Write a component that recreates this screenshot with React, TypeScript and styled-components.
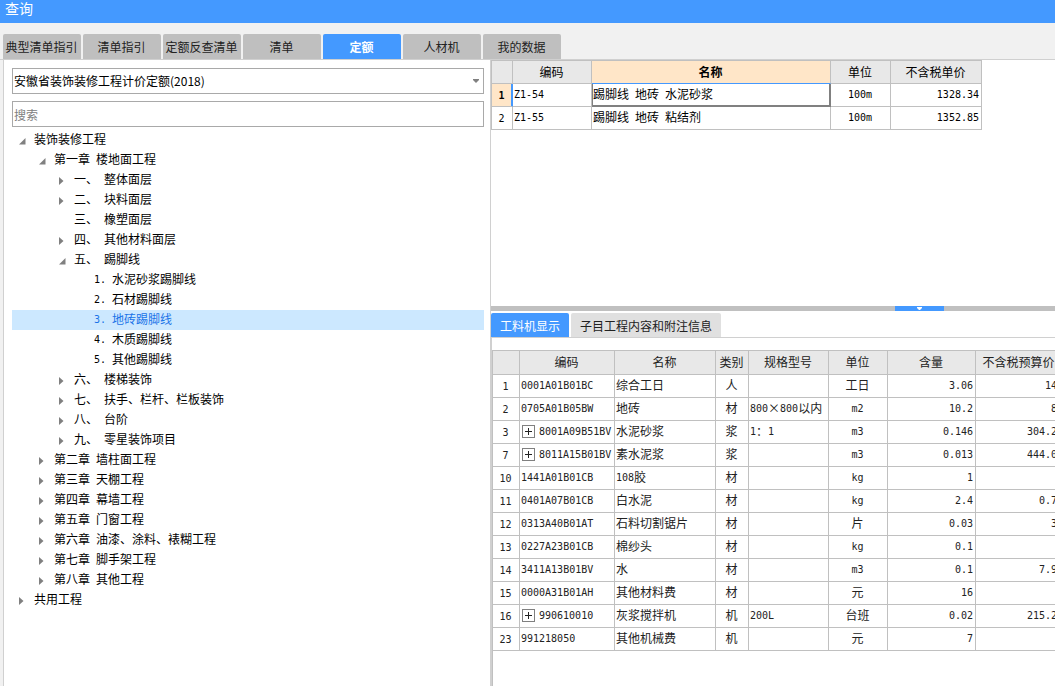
import React, { useState } from "react";
import styled, { createGlobalStyle, css } from "styled-components";

const BLUE = "#4499ff";
const LINE = "#c0c0c0";

const GlobalStyle = createGlobalStyle`
  * { box-sizing: border-box; }
  body {
    margin: 0;
    background: #f1f1f1;
    color: #000;
    font: 12px/20px "Noto Sans CJK SC", sans-serif;
    overflow: hidden;
  }
  button, input, select { font: inherit; color: inherit; }
`;

const Window = styled.div`
  display: flex;
  flex-direction: column;
  height: 100vh;
`;

const TitleBar = styled.header`
  flex: none;
  height: 23px;
  padding-left: 5px;
  background: ${BLUE};
  color: #fff;
  font-size: 14px;
  line-height: 16px;
`;

const TabStrip = styled.nav`
  flex: none;
  display: flex;
  gap: 2px;
  padding: 11px 3px 0;
  border-bottom: 1px solid #d0d0d0;
`;

const MainTab = styled.button<{ $active?: boolean }>`
  width: 78px;
  height: 25px;
  padding: 0 1px 0 0;
  border: 0;
  border-radius: 2px 2px 0 0;
  background: ${(p) => (p.$active ? BLUE : "#bfbfbf")};
  color: ${(p) => (p.$active ? "#fff" : "#222")};
  font-weight: ${(p) => (p.$active ? 700 : 400)};
  white-space: nowrap;
`;

const Body = styled.main`
  flex: 1;
  min-height: 0;
  display: flex;
  margin-left: 3px;
  background: #fff;
`;

const Sidebar = styled.aside`
  flex: 0 0 488px;
  padding: 8px 6px 0 8px;
  border: solid #d0d0d0;
  border-width: 0 1px;
  overflow: hidden;
`;

const SelectBox = styled.div`
  position: relative;
  margin-bottom: 7px;
`;

const fieldStyle = css`
  display: block;
  width: 100%;
  height: 26px;
  border: 1px solid #a9a9a9;
  border-radius: 0;
  background: #fff;
  outline: 0;
`;

const Select = styled.select`
  ${fieldStyle}
  appearance: none;
  padding: 0 20px 0 1px;
`;

const SelectArrow = styled.svg`
  position: absolute;
  right: 5px;
  top: 11px;
  pointer-events: none;
`;

const SearchInput = styled.input`
  ${fieldStyle}
  padding: 1px 1px 0;
  &::placeholder { color: #808080; opacity: 1; }
`;

const Tree = styled.ul`
  margin: 3px 0 0;
  padding: 0;
  list-style: none;
`;

const TreeRow = styled.li<{ $level: number; $selected: boolean }>`
  display: flex;
  align-items: center;
  height: 20px;
  padding: 0 0 2px ${(p) => 6 + p.$level * 20}px;
  background: ${(p) => (p.$selected ? "#cce8ff" : "transparent")};
  color: ${(p) => (p.$selected ? "#1a73e8" : "#000")};
  cursor: default;
`;

const Toggle = styled.button`
  display: flex;
  width: 16px;
  height: 20px;
  padding: 8px 0 0 1px;
  border: 0;
  background: none;
`;

const ToggleSpace = styled.span`
  width: 16px;
`;

const Latin = styled.span`
  font-family: "DejaVu Sans Mono", monospace;
  font-size: 10px;
  line-height: 0;
  vertical-align: 1px;
  white-space: pre;
`;

const Content = styled.section`
  flex: 1;
  min-width: 0;
  display: flex;
  flex-direction: column;
  overflow: hidden;
`;

const QuotaPane = styled.div`
  flex: none;
  height: 246px;
`;

const Table = styled.table`
  table-layout: fixed;
  width: 0;
  border-collapse: separate;
  border-spacing: 0;
  border: solid ${LINE};
  border-width: 1px 0 0 1px;
  line-height: 18px;
`;

type Align = "left" | "center" | "right";

const Th = styled.th<{ $active?: boolean; $tall?: boolean }>`
  height: ${(p) => (p.$tall ? 24 : 23)}px;
  padding: 0 1px ${(p) => (p.$tall ? 2 : 0)}px 0;
  border: solid ${LINE};
  border-width: 0 1px 1px 0;
  border-bottom-color: ${(p) => (p.$active ? BLUE : LINE)};
  background: ${(p) => (p.$active ? "#ffe6c8" : "#e8e8e8")};
  font-weight: ${(p) => (p.$active ? 700 : 400)};
  white-space: nowrap;
`;

const Td = styled.td<{ $align?: Align; $focus?: boolean; $wide?: boolean }>`
  height: 23px;
  padding: 0 ${(p) => (p.$wide ? 5 : 2)}px 3px 1px;
  border: solid ${(p) => (p.$focus ? "#808080" : LINE)};
  border-width: 0 1px 1px 0;
  box-shadow: ${(p) => (p.$focus ? "inset 1px 0 #808080, inset -1px -1px #808080" : "none")};
  text-align: ${(p) => p.$align ?? "left"};
  white-space: nowrap;
`;

const RowNumber = styled.th<{ $active?: boolean }>`
  height: 23px;
  padding: 0 1px 0 0;
  border: solid ${LINE};
  border-width: 0 1px 1px 0;
  font-weight: ${(p) => (p.$active ? 700 : 400)};
  ${(p) =>
    p.$active &&
    css`
      border-right-color: ${BLUE};
      background: #ffe6c8;
      box-shadow: inset -1px 0 ${BLUE};
    `}
`;

const Splitter = styled.div`
  flex: none;
  display: flex;
  justify-content: flex-end;
  height: 5px;
  padding-right: 111px;
  background: ${LINE};
`;

const SplitterHandle = styled.button`
  display: flex;
  justify-content: center;
  width: 49px;
  height: 5px;
  padding: 1px 0 0;
  border: 0;
  background: ${BLUE};
`;

const DetailTabs = styled.div`
  flex: none;
  display: flex;
  gap: 2px;
  padding-top: 2px;
  border-bottom: 1px solid #d0d0d0;
`;

const DetailTab = styled.button<{ $active?: boolean }>`
  height: 24px;
  padding: 1px 9px 0;
  border: 0;
  border-radius: 2px 2px 0 0;
  background: ${(p) => (p.$active ? BLUE : "#e0e0e0")};
  color: ${(p) => (p.$active ? "#fff" : "#222")};
`;

const DetailPane = styled.div`
  flex: 1;
  padding-top: 12px;
  border-left: 1px solid #d0d0d0;
  display: flex;
  color: #222;
`;

const DetailGrid = styled.div`
  flex: 1;
  min-width: 0;
  border-left: 1px solid ${LINE};
  ${Table} { border-left: 0; }
`;

const CodeCell = styled.div`
  display: flex;
  align-items: center;
  gap: 4px;
`;

const ExpandButton = styled.button`
  display: flex;
  width: 13px;
  height: 13px;
  margin: 2px 0 0 1px;
  padding: 1px;
  border: 1px solid #808080;
  background: #fff;
`;

/* Sets half-width characters in the monospaced face so two fill one ideograph. */
function Mixed({ children }: { children: string }) {
  return (
    <span>
      {children.split(/([\x20-\x7e]+)/).map((run, i) =>
        i % 2 ? <Latin key={i}>{run}</Latin> : run,
      )}
    </span>
  );
}

type NodeState = "open" | "closed" | "leaf";
const nodes: [number, NodeState, string][] = [
  [0, "open", "装饰装修工程"],
  [1, "open", "第一章 楼地面工程"],
  [2, "closed", "一、 整体面层"],
  [2, "closed", "二、 块料面层"],
  [2, "leaf", "三、 橡塑面层"],
  [2, "closed", "四、 其他材料面层"],
  [2, "open", "五、 踢脚线"],
  [3, "leaf", "1. 水泥砂浆踢脚线"],
  [3, "leaf", "2. 石材踢脚线"],
  [3, "leaf", "3. 地砖踢脚线"],
  [3, "leaf", "4. 木质踢脚线"],
  [3, "leaf", "5. 其他踢脚线"],
  [2, "closed", "六、 楼梯装饰"],
  [2, "closed", "七、 扶手、栏杆、栏板装饰"],
  [2, "closed", "八、 台阶"],
  [2, "closed", "九、 零星装饰项目"],
  [1, "closed", "第二章 墙柱面工程"],
  [1, "closed", "第三章 天棚工程"],
  [1, "closed", "第四章 幕墙工程"],
  [1, "closed", "第五章 门窗工程"],
  [1, "closed", "第六章 油漆、涂料、裱糊工程"],
  [1, "closed", "第七章 脚手架工程"],
  [1, "closed", "第八章 其他工程"],
  [0, "closed", "共用工程"],
];

const mainTabs = ["典型清单指引", "清单指引", "定额反查清单", "清单", "定额", "人材机", "我的数据"];

const quotas = [
  ["1", "Z1-54", "踢脚线 地砖 水泥砂浆", "100m", "1328.34"],
  ["2", "Z1-55", "踢脚线 地砖 粘结剂", "100m", "1352.85"],
];

const resources = [
  ["1", "0001A01B01BC", "综合工日", "人", "", "工日", "3.06", "14"],
  ["2", "0705A01B05BW", "地砖", "材", "800×800以内", "m2", "10.2", "8"],
  ["3", "+8001A09B51BV", "水泥砂浆", "浆", "1：1", "m3", "0.146", "304.2"],
  ["7", "+8011A15B01BV", "素水泥浆", "浆", "", "m3", "0.013", "444.0"],
  ["10", "1441A01B01CB", "108胶", "材", "", "kg", "1", ""],
  ["11", "0401A07B01CB", "白水泥", "材", "", "kg", "2.4", "0.7"],
  ["12", "0313A40B01AT", "石料切割锯片", "材", "", "片", "0.03", "3"],
  ["13", "0227A23B01CB", "棉纱头", "材", "", "kg", "0.1", ""],
  ["14", "3411A13B01BV", "水", "材", "", "m3", "0.1", "7.9"],
  ["15", "0000A31B01AH", "其他材料费", "材", "", "元", "16", ""],
  ["16", "+990610010", "灰浆搅拌机", "机", "200L", "台班", "0.02", "215.2"],
  ["23", "991218050", "其他机械费", "机", "", "元", "7", ""],
];
const resourceAlign: Align[] = ["left", "left", "center", "left", "center", "right", "right"];

function Columns({ widths }: { widths: number[] }) {
  return (
    <colgroup>
      {widths.map((w, i) => (
        <col key={i} width={w} />
      ))}
    </colgroup>
  );
}

function Code({ value }: { value: string }) {
  if (!value.startsWith("+")) return <Mixed>{value}</Mixed>;
  return (
    <CodeCell>
      <ExpandButton aria-label="展开">
        <svg width="9" height="9" viewBox="0 0 9 9" shapeRendering="crispEdges">
          <path d="M1 4h7v1H1zM4 1h1v7H4z" fill="#222" />
        </svg>
      </ExpandButton>
      <Mixed>{value.slice(1)}</Mixed>
    </CodeCell>
  );
}

export default function App() {
  const [tab, setTab] = useState(4);
  const [selected, setSelected] = useState(9);
  const [detail, setDetail] = useState(0);

  return (
    <Window>
      <GlobalStyle />
      <TitleBar>查询</TitleBar>
      <TabStrip>
        {mainTabs.map((name, i) => (
          <MainTab key={name} $active={i === tab} onClick={() => setTab(i)}>
            {name}
          </MainTab>
        ))}
      </TabStrip>
      <Body>
        <Sidebar>
          <SelectBox>
            <Select aria-label="定额库">
              <option>安徽省装饰装修工程计价定额(2018)</option>
            </Select>
            <SelectArrow width="6" height="4" viewBox="0 0 6 4">
              <path d="M0 0h6v1L3 4 0 1z" fill="#808080" />
            </SelectArrow>
          </SelectBox>
          <SearchInput type="text" placeholder="搜索" aria-label="搜索" />
          <Tree>
            {nodes.map(([level, state, label], i) => (
              <TreeRow
                key={label}
                $level={level}
                $selected={i === selected}
                onClick={() => setSelected(i)}
              >
                {state === "leaf" ? (
                  <ToggleSpace />
                ) : (
                  <Toggle aria-label={label} aria-expanded={state === "open"}>
                    <svg width="7" height="8" viewBox="0 0 7 8">
                      <path
                        d={state === "open" ? "M6.5 1v6.5H0z" : "M0 0l4.5 4L0 8z"}
                        fill="#808080"
                      />
                    </svg>
                  </Toggle>
                )}
                <Mixed>{label}</Mixed>
              </TreeRow>
            ))}
          </Tree>
        </Sidebar>
        <Content>
          <QuotaPane>
            <Table>
              <Columns widths={[21, 79, 239, 60, 91]} />
              <thead>
                <tr>
                  <Th />
                  <Th>编码</Th>
                  <Th $active>名称</Th>
                  <Th>单位</Th>
                  <Th>不含税单价</Th>
                </tr>
              </thead>
              <tbody>
                {quotas.map(([no, code, name, unit, price], i) => (
                  <tr key={no}>
                    <RowNumber $active={i === 0}>
                      <Latin>{no}</Latin>
                    </RowNumber>
                    <Td><Mixed>{code}</Mixed></Td>
                    <Td $focus={i === 0}><Mixed>{name}</Mixed></Td>
                    <Td $align="center"><Mixed>{unit}</Mixed></Td>
                    <Td $align="right"><Mixed>{price}</Mixed></Td>
                  </tr>
                ))}
              </tbody>
            </Table>
          </QuotaPane>
          <Splitter>
            <SplitterHandle aria-label="收起">
              <svg width="5" height="3" viewBox="0 0 5 3">
                <path d="M0 0h5v1L3 3H2L0 1z" fill="#fff" />
              </svg>
            </SplitterHandle>
          </Splitter>
          <DetailTabs>
            {["工料机显示", "子目工程内容和附注信息"].map((name, i) => (
              <DetailTab key={name} $active={i === detail} onClick={() => setDetail(i)}>
                {name}
              </DetailTab>
            ))}
          </DetailTabs>
          <DetailPane>
            <DetailGrid>
              <Table>
                <Columns widths={[27, 95, 101, 33, 80, 59, 88, 87]} />
                <thead>
                  <tr>
                    {["", "编码", "名称", "类别", "规格型号", "单位", "含量", "不含税预算价"].map((h) => (
                      <Th key={h} $tall>{h}</Th>
                    ))}
                  </tr>
                </thead>
                <tbody>
                  {resources.map(([no, ...cells]) => (
                    <tr key={no}>
                      <RowNumber><Latin>{no}</Latin></RowNumber>
                      {cells.map((value, i) => (
                        <Td key={i} $align={resourceAlign[i]} $wide={i === 6}>
                          {i === 0 ? <Code value={value} /> : <Mixed>{value}</Mixed>}
                        </Td>
                      ))}
                    </tr>
                  ))}
                </tbody>
              </Table>
            </DetailGrid>
          </DetailPane>
        </Content>
      </Body>
    </Window>
  );
}
